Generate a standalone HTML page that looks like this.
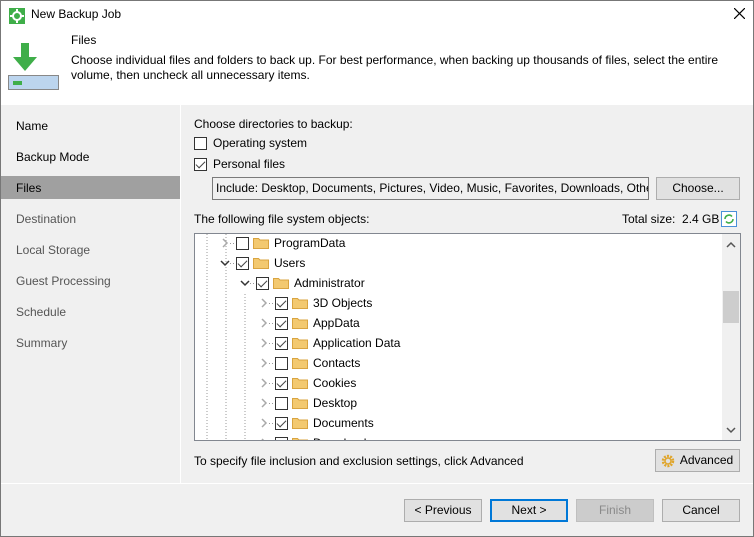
<!DOCTYPE html>
<html><head><style>
*{margin:0;padding:0;box-sizing:border-box}
body{width:754px;height:537px;overflow:hidden;font-family:"Segoe UI","Liberation Sans",sans-serif;font-size:12px;color:#000;background:#f0f0f0;position:relative}
.a{position:absolute;white-space:nowrap}
.win{position:absolute;left:0;top:0;width:754px;height:537px;border:1px solid #777;}
.cb{position:absolute;width:13px;height:13px;border:1px solid #333;background:#fff}
.cb.c::after{content:"";position:absolute;left:3px;top:0px;width:4px;height:8px;border:solid #444;border-width:0 1.5px 1.5px 0;transform:rotate(45deg)}
.btn{position:absolute;height:23px;border:1px solid #adadad;background:#e1e1e1;text-align:center;line-height:21px;font-size:12px}
.nav{position:absolute;left:16px}
.grey{color:#555}
</style></head><body>
<div class="win"></div>
<div class="a" style="left:1px;top:1px;width:752px;height:104px;background:#fff"></div>
<svg class="a" style="left:9px;top:8px" width="16" height="16"><rect width="16" height="16" fill="#3fae49"/><circle cx="8" cy="8" r="4" fill="none" stroke="#fff" stroke-width="2"/><g stroke="#fff" stroke-width="2"><line x1="8" y1="1" x2="8" y2="4"/><line x1="8" y1="12" x2="8" y2="15"/><line x1="1" y1="8" x2="4" y2="8"/><line x1="12" y1="8" x2="15" y2="8"/></g></svg>
<div class="a" style="left:31px;top:7px;font-size:12px">New Backup Job</div>
<svg class="a" style="left:734px;top:8px" width="11" height="11"><path d="M0 0L11 11M11 0L0 11" stroke="#000" stroke-width="1.2"/></svg>
<svg class="a" style="left:8px;top:40px" width="52" height="52"><path d="M13 3h8v14h8L17 31 5 17h8z" fill="#3fae49"/><rect x="0.5" y="35.5" width="50" height="14" fill="#bcd5ee" stroke="#888"/><rect x="5" y="41" width="9" height="4" fill="#3fae49"/></svg>
<div class="a" style="left:71px;top:33px">Files</div>
<div class="a" style="left:71px;top:53px;line-height:15px">Choose individual files and folders to back up. For best performance, when backing up thousands of files, select the entire<br>volume, then uncheck all unnecessary items.</div>
<div class="a" style="left:180px;top:105px;width:1px;height:378px;background:#fff"></div>
<div class="a" style="left:1px;top:176px;width:179px;height:23px;background:#a0a0a0"></div>
<div class="a nav" style="top:119px">Name</div>
<div class="a nav" style="top:150px">Backup Mode</div>
<div class="a nav" style="top:181px">Files</div>
<div class="a nav grey" style="top:212px">Destination</div>
<div class="a nav grey" style="top:243px">Local Storage</div>
<div class="a nav grey" style="top:274px">Guest Processing</div>
<div class="a nav grey" style="top:305px">Schedule</div>
<div class="a nav grey" style="top:336px">Summary</div>
<div class="a" style="left:194px;top:117px">Choose directories to backup:</div>
<div class="cb" style="left:194px;top:137px"></div><div class="a" style="left:213px;top:136px">Operating system</div>
<div class="cb c" style="left:194px;top:158px"></div><div class="a" style="left:213px;top:157px">Personal files</div>
<div class="a" style="left:212px;top:177px;width:437px;height:23px;border:1px solid #7a7a7a;background:#f0f0f0;padding:3px 3px;overflow:hidden">Include: Desktop, Documents, Pictures, Video, Music, Favorites, Downloads, Other</div>
<div class="btn" style="left:656px;top:177px;width:84px">Choose...</div>
<div class="a" style="left:194px;top:212px">The following file system objects:</div>
<div class="a" style="left:622px;top:212px">Total size:&nbsp; 2.4 GB</div>
<svg class="a" style="left:721px;top:211px" width="16" height="16"><rect x=".5" y=".5" width="15" height="15" fill="#fff" stroke="#4a90d9"/><path d="M4 8a4 4 0 0 1 7-2.5M12 8a4 4 0 0 1-7 2.5" fill="none" stroke="#3fae49" stroke-width="1.6"/></svg>
<div class="a" style="left:194px;top:233px;width:547px;height:208px;border:1px solid #828790;background:#fff;overflow:hidden">
<svg width="545" height="206" style="position:absolute;left:0;top:0">
<g stroke="#999" stroke-dasharray="1,2"><line x1="12" y1="0" x2="12" y2="206"/><line x1="31" y1="0" x2="31" y2="206"/><line x1="50" y1="60" x2="50" y2="206"/></g>
<rect x="527" y="0" width="18" height="206" fill="#f0f0f0"/><rect x="528" y="57" width="16" height="32" fill="#cdcdcd"/>
<path d="M532 13l4-4 4 4M532 194l4 4 4-4" fill="none" stroke="#555" stroke-width="1.5"/>
</svg>
</div>
<div id="t"></div>
<div class="a" style="left:194px;top:454px">To specify file inclusion and exclusion settings, click Advanced</div>
<div class="btn" style="left:655px;top:449px;width:85px;padding-left:18px">Advanced</div>
<svg class="a" style="left:660px;top:453px" width="16" height="16"><circle cx="8" cy="8" r="5" fill="none" stroke="#e0a52a" stroke-width="2.5" stroke-dasharray="2,1.2"/><circle cx="8" cy="8" r="3" fill="none" stroke="#e0a52a" stroke-width="1.5"/></svg>
<div class="a" style="left:1px;top:483px;width:752px;height:1px;background:#fff"></div>
<div class="btn" style="left:404px;top:499px;width:78px">&lt; Previous</div>
<div class="btn" style="left:490px;top:499px;width:78px;border:2px solid #0078d7;line-height:19px">Next &gt;</div>
<div class="btn" style="left:576px;top:499px;width:78px;background:#ccc;border-color:#bfbfbf;color:#8a8a8a">Finish</div>
<div class="btn" style="left:662px;top:499px;width:78px">Cancel</div>
<script>
var rows=[["ProgramData",224,0,0],["Users",224,1,1],["Administrator",244,1,1],["3D Objects",263,1,0],["AppData",263,1,0],["Application Data",263,1,0],["Contacts",263,0,0],["Cookies",263,1,0],["Desktop",263,0,0],["Documents",263,1,0],["Downloads",263,0,0]];
var h="";rows.forEach(function(r,i){var y=243+i*20;var x=r[1];
var ch=r[3]?'<path d="M1 3l4 4 4-4" fill="none" stroke="#333" stroke-width="1.5"/>':'<path d="M3 1l4 4-4 4" fill="none" stroke="#aaa" stroke-width="1.5"/>';
h+='<svg class="a" style="left:'+(x-4)+'px;top:'+(y-5)+'px" width="10" height="10">'+ch+'</svg>';
h+='<svg class="a" style="left:'+(x+6)+'px;top:'+y+'px" width="6" height="1"><path d="M0 .5h6" stroke="#999" stroke-dasharray="1,2"/></svg>';
h+='<div class="cb'+(r[2]?' c':'')+'" style="left:'+(x+12)+'px;top:'+(y-6)+'px"></div>';
h+='<svg class="a" style="left:'+(x+29)+'px;top:'+(y-7)+'px" width="16" height="13"><path d="M.5 2.5h5l1.5 1.5h8.5v8.5H.5z" fill="#f3c970" stroke="#d9a441"/></svg>';
h+='<div class="a" style="left:'+(x+50)+'px;top:'+(y-7)+'px">'+r[0]+'</div>';});
var t=document.getElementById("t");t.innerHTML=h;t.style.cssText="position:absolute;left:0;top:0;width:754px;height:440px;clip-path:inset(234px 20px 0 195px)";
</script>
</body></html>
